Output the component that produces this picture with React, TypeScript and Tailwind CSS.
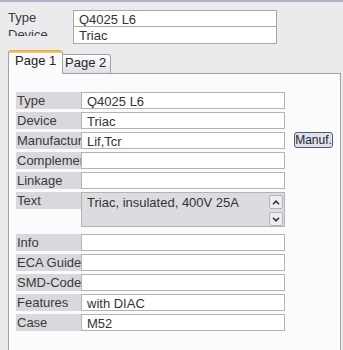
import React from 'react'

const rows1 = [
  { label: 'Type', value: 'Q4025 L6' },
  { label: 'Device', value: 'Triac' },
]

function Row({ label, value, className = '' }: { label: string; value: string; className?: string }) {
  return (
    <div className={`flex ${className}`}>
      <div className="w-[65px] h-[17px] bg-[#d9d9dd] overflow-hidden whitespace-nowrap pl-[1px] leading-[17px] text-[#3a3a3a]">
        {label}
      </div>
      <div className="w-[204px] h-[17px] border border-[#b4b4b4] bg-white overflow-hidden whitespace-nowrap pl-[5px] pt-[1px] leading-[15px] text-[#333]">
        {value}
      </div>
    </div>
  )
}

function Chevron({ up }: { up?: boolean }) {
  return (
    <svg width="8" height="5" viewBox="0 0 8 5">
      <polyline
        points={up ? '1,4.2 4,1.2 7,4.2' : '1,0.8 4,3.8 7,0.8'}
        fill="none"
        stroke="#2c3440"
        strokeWidth="1.6"
      />
    </svg>
  )
}

export default function App() {
  return (
    <div className="w-[343px] h-[350px] overflow-hidden bg-[#ebebee] border-t-2 border-[#b0b1c4] font-['Liberation_Sans',Arial,sans-serif] text-[13px]">
      {/* Header fields */}
      <div className="flex pl-2 pt-[7px]">
        <div className="w-[65px] h-[27px] overflow-hidden leading-[17px] text-[#3a3a3a]">
          {rows1.map((r) => (
            <div key={r.label}>{r.label}</div>
          ))}
        </div>
        <div className="w-[204px] mt-[1px] border border-[#a9a9a9] bg-white text-[#333]">
          <div className="h-[16px] border-b border-[#a9a9a9] overflow-hidden pl-[5px] pt-[2px] leading-[14px]">Q4025 L6</div>
          <div className="h-[16px] overflow-hidden pl-[5px] pt-[2px] leading-[14px]">Triac</div>
        </div>
      </div>

      {/* Tabs */}
      <div className="flex items-end h-[24px] mt-[6px] pl-2">
        <div className="relative z-10 w-[55px] h-[24px] bg-[#fbfbfd] border-x border-[#a0a0a8] rounded-t-[3px] overflow-hidden">
          <div className="h-[3px] bg-gradient-to-b from-[#e9a33a] to-[#f8cf7c]" />
          <div className="pl-[6px] leading-[16px] text-[#222]">Page 1</div>
        </div>
        <div className="w-[48px] h-[20px] border border-[#a0a0a8] border-l-0 rounded-tr-[3px] bg-gradient-to-b from-white to-[#dedee8] pl-[2px] leading-[16px] text-[#222]">
          Page 2
        </div>
      </div>

      {/* Page content */}
      <div className="relative mt-[-1px] ml-2 w-[333px] h-[300px] border border-[#a0a0a8] bg-[#fbfbfd] pt-[18px] pl-[7px]">
        <Row label="Type" value="Q4025 L6" />
        <Row label="Device" value="Triac" className="mt-[3px]" />
        <div className="flex mt-[3px]">
          <Row label="Manufacturer" value="Lif,Tcr" />
          <button className="ml-[9px] w-[39px] h-[16px] border border-[#4f5b78] rounded-[3px] bg-[#dfe0ea] text-[12px] leading-[13px] text-[#1d2330] font-['Liberation_Sans',Arial,sans-serif]">
            Manuf.
          </button>
        </div>
        <Row label="Complement" value="" className="mt-[3px]" />
        <Row label="Linkage" value="" className="mt-[3px]" />

        <div className="flex mt-[3px]">
          <div className="w-[65px] h-[17px] bg-[#d9d9dd] pl-[1px] leading-[17px] text-[#3a3a3a]">Text</div>
          <div className="flex w-[204px] h-[35px] border border-[#b4b4b4] bg-[#dcdce0]">
            <div className="flex-1 pl-[5px] pt-[2px] leading-[16px] text-[#333]">Triac, insulated, 400V 25A</div>
            <div className="flex flex-col gap-[3px] pt-[2px] pr-[1px]">
              <div className="w-[14px] h-[14px] border border-[#b3b3bd] rounded-[2px] bg-[#ececf1] flex items-center justify-center">
                <Chevron up />
              </div>
              <div className="w-[14px] h-[14px] border border-[#b3b3bd] rounded-[2px] bg-[#ececf1] flex items-center justify-center">
                <Chevron />
              </div>
            </div>
          </div>
        </div>

        <Row label="Info" value="" className="mt-[7px]" />
        <Row label="ECA Guide" value="" className="mt-[3px]" />
        <Row label="SMD-Code" value="" className="mt-[3px]" />
        <Row label="Features" value="with DIAC" className="mt-[3px]" />
        <Row label="Case" value="M52" className="mt-[3px]" />
      </div>
    </div>
  )
}
